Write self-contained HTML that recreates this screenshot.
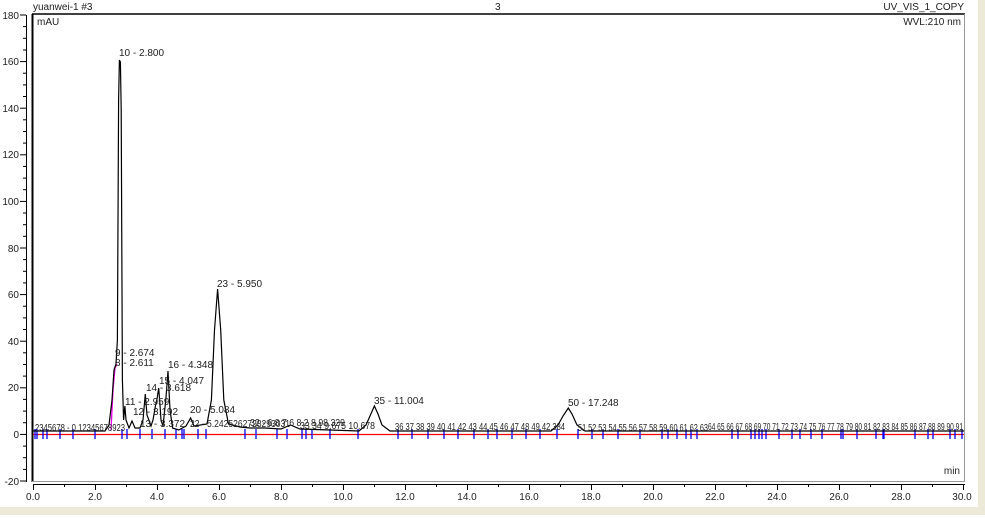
<!DOCTYPE html>
<html><head><meta charset="utf-8"><style>
html,body{margin:0;padding:0;background:#fff;}
body{width:985px;height:515px;overflow:hidden;position:relative;font-family:"Liberation Sans",sans-serif;}
svg text{font-family:"Liberation Sans",sans-serif;font-size:10px;}
</style></head><body>
<svg width="985" height="515" viewBox="0 0 985 515" xmlns="http://www.w3.org/2000/svg">
<rect x="0" y="0" width="985" height="515" fill="#fff"/>
<rect x="0" y="507" width="985" height="8" fill="#ece9d8"/>
<rect x="978" y="0" width="7" height="507" fill="#ece9d8"/>
<text x="33" y="10" fill="#222">yuanwei-1 #3</text>
<text x="495" y="10" fill="#222">3</text>
<text x="964" y="10" fill="#222" text-anchor="end">UV_VIS_1_COPY</text>
<line x1="32" y1="14" x2="965" y2="14" stroke="#000" stroke-width="1.5"/>
<line x1="32.5" y1="14" x2="32.5" y2="482" stroke="#000" stroke-width="2"/>
<line x1="964.5" y1="14" x2="964.5" y2="482" stroke="#999" stroke-width="1"/>
<line x1="32" y1="481.5" x2="965" y2="481.5" stroke="#999" stroke-width="1"/>
<text x="37" y="25" fill="#222">mAU</text>
<text x="961" y="25" fill="#222" text-anchor="end">WVL:210 nm</text>
<text x="960" y="474" fill="#222" text-anchor="end">min</text>
<line x1="26.5" y1="15" x2="26.5" y2="482" stroke="#000"/>
<g stroke="#000">
<line x1="20" y1="15" x2="26" y2="15"/><line x1="20" y1="61.6" x2="26" y2="61.6"/><line x1="20" y1="108.2" x2="26" y2="108.2"/><line x1="20" y1="154.8" x2="26" y2="154.8"/><line x1="20" y1="201.4" x2="26" y2="201.4"/><line x1="20" y1="248" x2="26" y2="248"/><line x1="20" y1="294.6" x2="26" y2="294.6"/><line x1="20" y1="341.2" x2="26" y2="341.2"/><line x1="20" y1="387.8" x2="26" y2="387.8"/><line x1="20" y1="434.4" x2="26" y2="434.4"/><line x1="20" y1="481" x2="26" y2="481"/>
<line x1="23" y1="26.6" x2="26" y2="26.6"/><line x1="23" y1="38.3" x2="26" y2="38.3"/><line x1="23" y1="50" x2="26" y2="50"/>
<line x1="23" y1="73.2" x2="26" y2="73.2"/><line x1="23" y1="84.9" x2="26" y2="84.9"/><line x1="23" y1="96.5" x2="26" y2="96.5"/>
<line x1="23" y1="119.8" x2="26" y2="119.8"/><line x1="23" y1="131.5" x2="26" y2="131.5"/><line x1="23" y1="143.1" x2="26" y2="143.1"/>
<line x1="23" y1="166.4" x2="26" y2="166.4"/><line x1="23" y1="178.1" x2="26" y2="178.1"/><line x1="23" y1="189.7" x2="26" y2="189.7"/>
<line x1="23" y1="213" x2="26" y2="213"/><line x1="23" y1="224.7" x2="26" y2="224.7"/><line x1="23" y1="236.3" x2="26" y2="236.3"/>
<line x1="23" y1="259.6" x2="26" y2="259.6"/><line x1="23" y1="271.3" x2="26" y2="271.3"/><line x1="23" y1="282.9" x2="26" y2="282.9"/>
<line x1="23" y1="306.2" x2="26" y2="306.2"/><line x1="23" y1="317.9" x2="26" y2="317.9"/><line x1="23" y1="329.5" x2="26" y2="329.5"/>
<line x1="23" y1="352.8" x2="26" y2="352.8"/><line x1="23" y1="364.5" x2="26" y2="364.5"/><line x1="23" y1="376.1" x2="26" y2="376.1"/>
<line x1="23" y1="399.4" x2="26" y2="399.4"/><line x1="23" y1="411.1" x2="26" y2="411.1"/><line x1="23" y1="422.7" x2="26" y2="422.7"/>
<line x1="23" y1="446.1" x2="26" y2="446.1"/><line x1="23" y1="457.7" x2="26" y2="457.7"/><line x1="23" y1="469.4" x2="26" y2="469.4"/>
</g>
<g fill="#222" text-anchor="end">
<text x="19" y="19">180</text><text x="19" y="65">160</text><text x="19" y="112">140</text><text x="19" y="158">120</text><text x="19" y="205">100</text><text x="19" y="252">80</text><text x="19" y="298">60</text><text x="19" y="345">40</text><text x="19" y="391">20</text><text x="19" y="438">0</text><text x="19" y="485">-20</text>
</g>
<line x1="33" y1="484.5" x2="965" y2="484.5" stroke="#000"/>
<g stroke="#000">
<line x1="33.5" y1="484" x2="33.5" y2="490"/><line x1="95.5" y1="484" x2="95.5" y2="490"/><line x1="157.5" y1="484" x2="157.5" y2="490"/><line x1="219.5" y1="484" x2="219.5" y2="490"/><line x1="281.5" y1="484" x2="281.5" y2="490"/><line x1="343.5" y1="484" x2="343.5" y2="490"/><line x1="405.5" y1="484" x2="405.5" y2="490"/><line x1="467.5" y1="484" x2="467.5" y2="490"/><line x1="529.5" y1="484" x2="529.5" y2="490"/><line x1="591.5" y1="484" x2="591.5" y2="490"/><line x1="653.5" y1="484" x2="653.5" y2="490"/><line x1="715.5" y1="484" x2="715.5" y2="490"/><line x1="777.5" y1="484" x2="777.5" y2="490"/><line x1="839.5" y1="484" x2="839.5" y2="490"/><line x1="901.5" y1="484" x2="901.5" y2="490"/><line x1="963.5" y1="484" x2="963.5" y2="490"/>
<line x1="64.5" y1="484" x2="64.5" y2="487"/><line x1="126.5" y1="484" x2="126.5" y2="487"/><line x1="188.5" y1="484" x2="188.5" y2="487"/><line x1="250.5" y1="484" x2="250.5" y2="487"/><line x1="312.5" y1="484" x2="312.5" y2="487"/><line x1="374.5" y1="484" x2="374.5" y2="487"/><line x1="436.5" y1="484" x2="436.5" y2="487"/><line x1="498.5" y1="484" x2="498.5" y2="487"/><line x1="560.5" y1="484" x2="560.5" y2="487"/><line x1="622.5" y1="484" x2="622.5" y2="487"/><line x1="684.5" y1="484" x2="684.5" y2="487"/><line x1="746.5" y1="484" x2="746.5" y2="487"/><line x1="808.5" y1="484" x2="808.5" y2="487"/><line x1="870.5" y1="484" x2="870.5" y2="487"/><line x1="932.5" y1="484" x2="932.5" y2="487"/>
</g>
<g fill="#222" text-anchor="middle">
<text x="33" y="500">0.0</text><text x="95" y="500">2.0</text><text x="157" y="500">4.0</text><text x="219" y="500">6.0</text><text x="281" y="500">8.0</text><text x="343" y="500">10.0</text><text x="405" y="500">12.0</text><text x="467" y="500">14.0</text><text x="529" y="500">16.0</text><text x="591" y="500">18.0</text><text x="653" y="500">20.0</text><text x="715" y="500">22.0</text><text x="777" y="500">24.0</text><text x="839" y="500">26.0</text><text x="901" y="500">28.0</text><text x="962" y="500">30.0</text>
</g>
<line x1="33" y1="434.5" x2="964" y2="434.5" stroke="#f00" stroke-width="1.3"/>
<path stroke="#00f" stroke-width="1.3" fill="none" d="M35 429v10M37 429v10M43 429v10M47 429v10M60 429v10M73 429v10M95 429v10M122 429v10M127 429v10M140 429v10M152 429v10M165 429v10M176 429v10M182 429v10M184 429v10M198 429v10M206 429v10M245 429v10M256 429v10M277 429v10M287 429v10M302 429v10M306 429v10M312 429v10M330 429v10M358 429v10M398 429v10M412 429v10M428 429v10M444 429v10M458 429v10M474 429v10M488 429v10M497 429v10M512 429v10M526 429v10M540 429v10M557 429v10M578 429v10M592 429v10M603 429v10M618 429v10M640 429v10M662 429v10M668 429v10M677 429v10M686 429v10M691 429v10M697 429v10M732 429v10M738 429v10M751 429v10M755 429v10M759 429v10M762 429v10M766 429v10M779 429v10M792 429v10M800 429v10M811 429v10M822 429v10M841 429v10M843 429v10M857 429v10M876 429v10M883 429v10M884 429v10M915 429v10M928 429v10M933 429v10M950 429v10M955 429v10M962 429v10"/>
<path stroke="#e0e" stroke-width="1.3" fill="none" d="M111 430 L113 390 L115 368 L117 364"/>
<polyline fill="none" stroke="#000" stroke-width="1.2" points="33,431 105,431 109,425 112,400 114,370 116,364 117.4,340 118.6,100 119.4,60 120.4,62 121.2,110 122.4,380 123.6,420 124.9,406 126,420 129,428 132,421 135,428 140,428 143,420 145.3,394 147,415 151,426 153,420 155.6,405 157,399 158.7,388 160,405 161,420 163,426 165.8,400 168,371 170,410 172.6,428 178.8,430 186,426 190.6,418 194,426 207,424 211.4,400 214.5,330 217.6,289 220.7,330 223.8,400 228.5,424 240,427 250,428 265,428 281,429 290.5,425 300,429 330,430 359,431 366,425 370,416 374.4,406 378,414 382,425 390,431 551,431 558,425 563,416 568.3,408 572,414 577,425 585,431 964,431"/>
<g fill="#222">
<text x="119" y="56">10 - 2.800</text>
<text x="217" y="287">23 - 5.950</text>
<text x="115" y="356">9 - 2.674</text>
<text x="115" y="366">8 - 2.611</text>
<text x="168" y="368">16 - 4.348</text>
<text x="159" y="384">15 - 4.047</text>
<text x="146" y="391">14 - 3.618</text>
<text x="125" y="405">11 - 2.959</text>
<text x="133" y="415">12 - 3.192</text>
<text x="190" y="413">20 - 5.084</text>
<text x="374" y="404">35 - 11.004</text>
<text x="568" y="406">50 - 17.248</text>
<text x="140" y="427">13 - 3.372</text>
<text x="35" y="431" textLength="90" lengthAdjust="spacingAndGlyphs">2345678 - 0.12345678923</text>
<text x="190" y="427" textLength="100" lengthAdjust="spacingAndGlyphs">22 - 5.2425262728293031</text>
<text x="250" y="426" textLength="95" lengthAdjust="spacingAndGlyphs">32 - 6.8 7.6 8.2 8.98.329</text>
<text x="300" y="429" textLength="75" lengthAdjust="spacingAndGlyphs">33 34 9.675 10.678</text>
<text x="395" y="430" textLength="170" lengthAdjust="spacingAndGlyphs">36 37 38 39 40 41 42 43 44 45 46 47 48 49 42.384</text>
<text x="578" y="431" textLength="130" lengthAdjust="spacingAndGlyphs">51 52 53 54 55 56 57 58 59 60 61 62 63</text>
<text x="708" y="430" textLength="255" lengthAdjust="spacingAndGlyphs">64 65 66 67 68 69 70 71 72 73 74 75 76 77 78 79 80 81 82 83 84 85 86 87 88 89 90 91</text>
</g>
</svg>
</body></html>
